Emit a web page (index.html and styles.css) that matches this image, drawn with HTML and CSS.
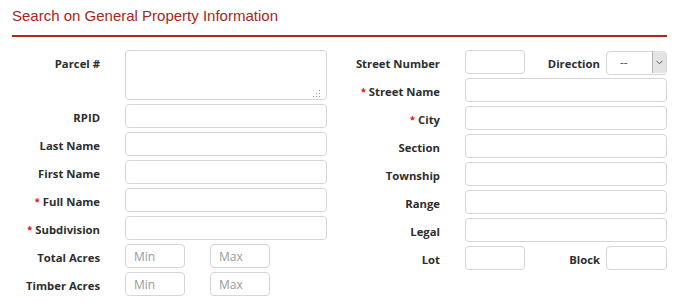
FILE: index.html
```html
<!DOCTYPE html>
<html lang="en">
<head>
  <meta charset="UTF-8" />
  <meta name="viewport" content="width=device-width, initial-scale=1.0"/>
  <title>General Property Search</title>
  <link rel="stylesheet" href="styles.css">
</head>
<body>

  <h1 class="title">Search on General Property Information</h1>

  <form class="search-form" id="searchForm">
    <!-- Left column -->
    <div class="col">
      <label for="parcel">Parcel #</label>
      <textarea id="parcel" class="field tall"></textarea>

      <label for="rpid">RPID</label>
      <input type="text" id="rpid" class="field" />

      <label for="lastName">Last Name</label>
      <input type="text" id="lastName" class="field" />

      <label for="firstName">First Name</label>
      <input type="text" id="firstName" class="field" />

      <label for="fullName"><span class="req">*</span>Full Name</label>
      <input type="text" id="fullName" class="field" />

      <label for="subdivision"><span class="req">*</span>Subdivision</label>
      <input type="text" id="subdivision" class="field" />

      <label for="totalMin">Total Acres</label>
      <div class="range">
        <input type="text" id="totalMin" class="field small" placeholder="Min" />
        <input type="text" id="totalMax" class="field small" placeholder="Max" />
      </div>

      <label for="timberMin">Timber Acres</label>
      <div class="range">
        <input type="text" id="timberMin" class="field small" placeholder="Min" />
        <input type="text" id="timberMax" class="field small" placeholder="Max" />
      </div>
    </div>

    <!-- Right column -->
    <div class="col">
      <label for="streetNumber">Street Number</label>
      <div class="pair">
        <input type="text" id="streetNumber" class="field small" />
        <label for="direction" class="pair-label">Direction</label>
        <div class="select-wrap">
          <select id="direction" class="field select">
            <option>--</option>
            <option>N</option>
            <option>S</option>
            <option>E</option>
            <option>W</option>
          </select>
          <span class="select-arrow">
            <svg width="7" height="5" viewBox="0 0 7 5"><path d="M0.5 0.8 L3.5 3.8 L6.5 0.8" fill="none" stroke="#555" stroke-width="1"/></svg>
          </span>
        </div>
      </div>

      <label for="streetName"><span class="req">*</span>Street Name</label>
      <input type="text" id="streetName" class="field" />

      <label for="city"><span class="req">*</span>City</label>
      <input type="text" id="city" class="field" />

      <label for="section">Section</label>
      <input type="text" id="section" class="field" />

      <label for="township">Township</label>
      <input type="text" id="township" class="field" />

      <label for="range">Range</label>
      <input type="text" id="range" class="field" />

      <label for="legal">Legal</label>
      <input type="text" id="legal" class="field" />

      <label for="lot">Lot</label>
      <div class="pair">
        <input type="text" id="lot" class="field small" />
        <label for="block" class="pair-label">Block</label>
        <input type="text" id="block" class="field small wide" />
      </div>
    </div>
  </form>

</body>
</html>
```

FILE: styles.css
```css
body {
  margin: 0;
  background-color: #fff;
  font-family: 'Open Sans', sans-serif;
  color: #333;
}

.title {
  margin: 0 12px;
  padding: 7px 0 10px;
  font-family: 'Liberation Sans', Arial, sans-serif;
  font-size: 15px;
  line-height: 18px;
  font-weight: normal;
  color: #a8261b;
  border-bottom: 2px solid #b0261c;
}

.search-form {
  display: grid;
  grid-template-columns: 340px 339px;
  margin-top: 13px;
}

.col {
  display: grid;
  grid-template-columns: 100px 202px;
  column-gap: 25px;
  row-gap: 4px;
  align-content: start;
}

.col > label,
.pair-label {
  box-sizing: border-box;
  height: 24px;
  padding-top: 4px;
  font-size: 11.3px;
  font-weight: bold;
  line-height: 20px;
  text-align: right;
  color: #2e2e2e;
}

.req {
  color: #e00;
  font-size: 9px;
  margin-right: 3px;
  vertical-align: 1px;
}

.field {
  box-sizing: border-box;
  width: 100%;
  height: 24px;
  margin: 0;
  padding: 0 8px;
  border: 1px solid #d6d6d6;
  border-radius: 4px;
  font-family: 'Open Sans', sans-serif;
  font-size: 12px;
  color: #333;
  background-color: #fff;
}

.field::placeholder {
  color: #9a9a9a;
}

.tall {
  height: 50px;
  padding: 4px 8px;
  resize: vertical;
}

.tall::-webkit-resizer {
  background:
    radial-gradient(circle, #999 0.8px, transparent 1px) 7px 8px / 3px 3px no-repeat,
    radial-gradient(circle, #999 0.8px, transparent 1px) 4px 11px / 3px 3px no-repeat,
    radial-gradient(circle, #999 0.8px, transparent 1px) 7px 11px / 3px 3px no-repeat,
    radial-gradient(circle, #999 0.8px, transparent 1px) 7px 5px / 3px 3px no-repeat,
    radial-gradient(circle, #999 0.8px, transparent 1px) 4px 8px / 3px 3px no-repeat,
    radial-gradient(circle, #999 0.8px, transparent 1px) 1px 11px / 3px 3px no-repeat;
}

.small {
  width: 60px;
}

.wide {
  width: 61px;
}

.range {
  display: flex;
  gap: 25px;
}

.pair {
  display: flex;
  align-items: center;
}

.pair-label {
  flex: 1;
  margin-right: 6px;
}

.select-wrap {
  position: relative;
  width: 61px;
  height: 24px;
}

.select {
  -webkit-appearance: none;
  appearance: none;
  padding-left: 13px;
  color: #555;
}

.select-arrow {
  position: absolute;
  top: 1px;
  right: 1px;
  width: 13px;
  height: 22px;
  background-color: #e4e4e4;
  border-left: 1px solid #b5b5b5;
  border-radius: 0 3px 3px 0;
  display: flex;
  align-items: center;
  justify-content: center;
  pointer-events: none;
}
```
